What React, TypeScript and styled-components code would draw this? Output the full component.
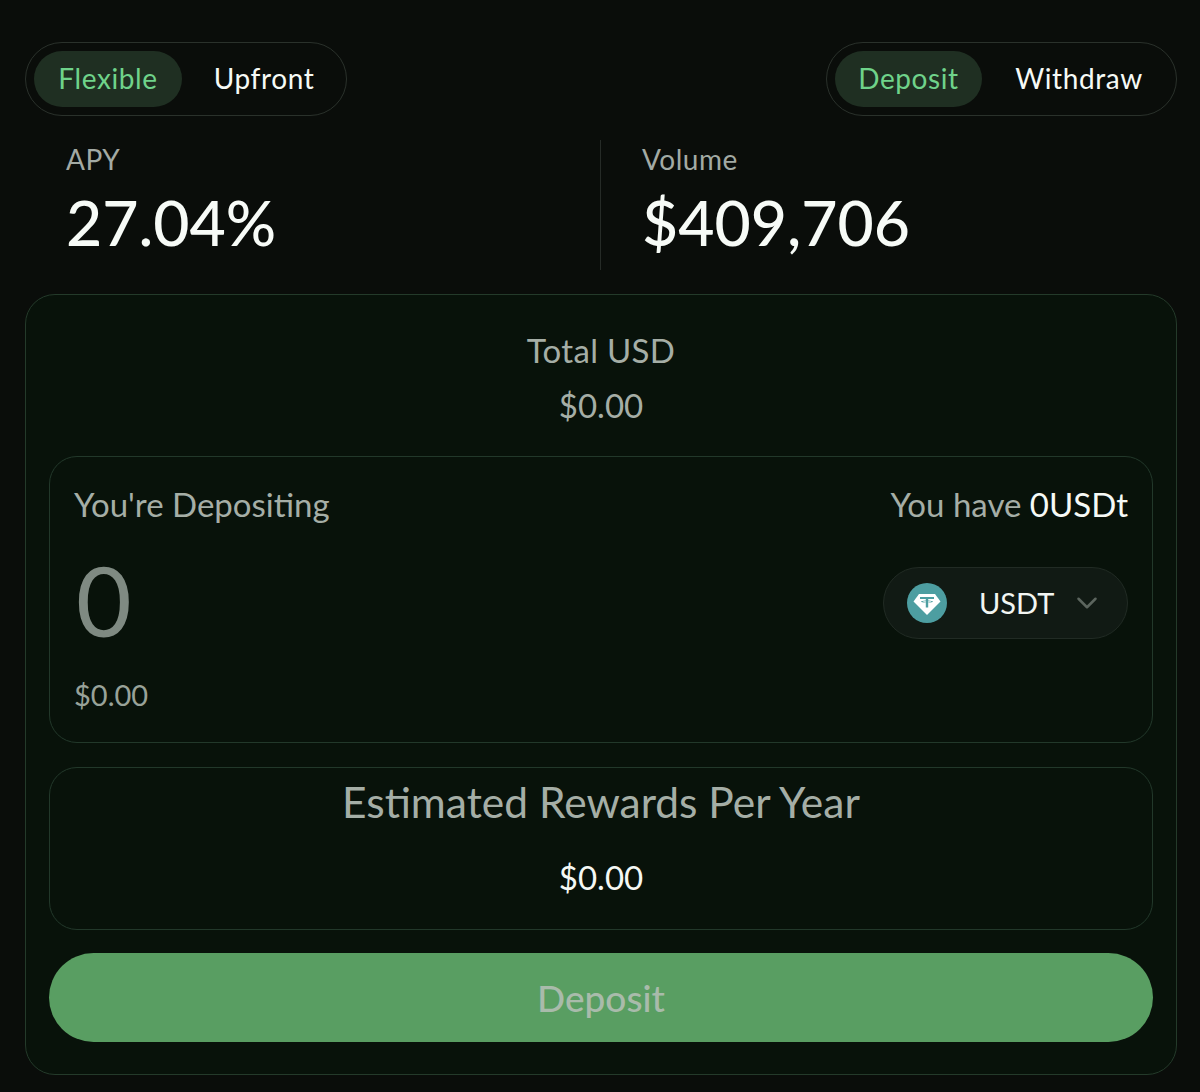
import React, { useState } from 'react';
import styled, { createGlobalStyle } from 'styled-components';
import { ChevronDown } from 'lucide-react';

const GlobalStyle = createGlobalStyle`
  html, body {
    margin: 0;
    padding: 0;
    background: #0a0d0a;
  }
  * {
    box-sizing: border-box;
  }
`;

const Page = styled.div`
  width: 1200px;
  height: 1092px;
  padding: 42px 23px 17px 25px;
  background: #0a0d0a;
  color: #f4f8f4;
  font-family: 'Lato', 'Noto Sans', sans-serif;
  display: flex;
  flex-direction: column;
`;

const TopBar = styled.div`
  display: flex;
  justify-content: space-between;
`;

const Toggle = styled.div`
  height: 74px;
  display: flex;
  align-items: center;
  padding-left: 8px;
  border: 1px solid #2a312b;
  border-radius: 37px;
`;

const ToggleOption = styled.button<{ $active?: boolean; $width: number }>`
  width: ${(p) => p.$width}px;
  height: 56px;
  border: 0;
  border-radius: 28px;
  padding: 0 0 3px;
  background: ${(p) => (p.$active ? '#1f2f22' : 'transparent')};
  color: ${(p) => (p.$active ? '#6fd38a' : '#f6faf6')};
  font-family: inherit;
  font-size: 28px;
  letter-spacing: 0.6px;
`;

const Stats = styled.div`
  height: 130px;
  margin-top: 24px;
  display: grid;
  grid-template-columns: 575px 1fr;
`;

const Stat = styled.div<{ $divided?: boolean }>`
  padding-left: ${(p) => (p.$divided ? '41px' : '41px')};
  border-left: ${(p) => (p.$divided ? '1px solid #262b27' : '0')};
`;

const StatLabel = styled.div`
  margin-top: -1px;
  font-size: 28px;
  line-height: 40px;
  letter-spacing: 0.5px;
  color: #a3aaa4;
`;

const StatValue = styled.div`
  margin-top: 8px;
  font-size: 62.5px;
  line-height: 70px;
  font-weight: 500;
  color: #f7fbf7;
`;

const MainCard = styled.div`
  height: 781px;
  margin-top: 24px;
  padding: 32px 23px 32px;
  display: flex;
  flex-direction: column;
  background: #08120a;
  border: 1px solid #243a2a;
  border-radius: 30px;
`;

const TotalBlock = styled.div`
  height: 129px;
  text-align: center;
`;

const TotalLabel = styled.div`
  font-size: 33px;
  line-height: 46px;
  letter-spacing: 0.3px;
  color: #a5aea6;
`;

const TotalValue = styled.div`
  margin-top: 9px;
  font-size: 33px;
  line-height: 46px;
  color: #a5aea6;
`;

const InnerCard = styled.div`
  border: 1px solid #22382a;
  border-radius: 28px;
`;

const DepositCard = styled(InnerCard)`
  height: 288px;
  padding: 26px 24px 0;
  display: flex;
  flex-direction: column;
`;

const Row = styled.div`
  display: flex;
  justify-content: space-between;
  align-items: center;
`;

const Muted = styled.div`
  font-size: 33px;
  line-height: 42px;
  color: #a5aea6;
`;

const Bright = styled.span`
  color: #f6faf6;
`;

const AmountRow = styled(Row)`
  margin-top: 42px;
  height: 72px;
`;

const Amount = styled.div`
  margin-left: 2px;
  padding-bottom: 6px;
  font-size: 96px;
  line-height: 72px;
  color: #7f8a82;
`;

const TokenSelect = styled.button`
  width: 245px;
  height: 72px;
  padding: 0 23px 0 23px;
  display: flex;
  align-items: center;
  background: #111a14;
  border: 1px solid #212b24;
  border-radius: 36px;
  color: #f2f6f2;
  font-family: inherit;
  font-size: 29px;
`;

const TokenName = styled.span`
  margin-left: 32px;
  flex: 1;
  text-align: left;
`;

const FiatValue = styled.div`
  margin-top: 36px;
  font-size: 29px;
  line-height: 40px;
  color: #98a299;
`;

const RewardsCard = styled(InnerCard)`
  height: 163px;
  margin-top: 24px;
  padding-top: 7px;
  text-align: center;
`;

const RewardsTitle = styled.div`
  font-size: 42.5px;
  line-height: 54px;
  color: #a5aea6;
`;

const RewardsValue = styled.div`
  margin-top: 25px;
  font-size: 33px;
  line-height: 46px;
  color: #f4f8f4;
`;

const SubmitButton = styled.button`
  height: 89px;
  margin-top: 23px;
  border: 0;
  border-radius: 45px;
  background: #599e62;
  color: #a9bbab;
  font-family: inherit;
  font-size: 37px;
  font-weight: 500;
`;

const TetherIcon = () => (
  <svg width="40" height="40" viewBox="0 0 40 40" aria-hidden="true">
    <circle cx="20" cy="20" r="20" fill="#4d9ea1" />
    <path d="M12 11h16l5.5 7.5L20 32 6.500 18.500z" fill="#fff" />
    <path
      d="M13 14h14v1.900h-5.800v1.500c2.700.15 4.800.55 4.800 1.100s-2.100.95-4.800 1.100v4.900h-2.400v-4.900c-2.700-.15-4.800-.55-4.800-1.100s2.100-.95 4.800-1.100v-1.500h-5.800zM18.800 18.300c-1.700.1-3.100.3-3.100.45s2 .45 4.300.45 4.300-.25 4.300-.45-1.400-.35-3.100-.45v.9h-2.400z"
      fill="#4d9ea1"
      fillRule="evenodd"
    />
  </svg>
);

export default function App() {
  const [mode, setMode] = useState('Flexible');
  const [side, setSide] = useState('Deposit');

  return (
    <Page>
      <GlobalStyle />
      <TopBar>
        <Toggle>
          <ToggleOption $width={148} $active={mode === 'Flexible'} onClick={() => setMode('Flexible')}>
            Flexible
          </ToggleOption>
          <ToggleOption $width={164} $active={mode === 'Upfront'} onClick={() => setMode('Upfront')}>
            Upfront
          </ToggleOption>
        </Toggle>
        <Toggle>
          <ToggleOption $width={147} $active={side === 'Deposit'} onClick={() => setSide('Deposit')}>
            Deposit
          </ToggleOption>
          <ToggleOption $width={194} $active={side === 'Withdraw'} onClick={() => setSide('Withdraw')}>
            Withdraw
          </ToggleOption>
        </Toggle>
      </TopBar>

      <Stats>
        <Stat>
          <StatLabel>APY</StatLabel>
          <StatValue>27.04%</StatValue>
        </Stat>
        <Stat $divided>
          <StatLabel>Volume</StatLabel>
          <StatValue>$409,706</StatValue>
        </Stat>
      </Stats>

      <MainCard>
        <TotalBlock>
          <TotalLabel>Total USD</TotalLabel>
          <TotalValue>$0.00</TotalValue>
        </TotalBlock>

        <DepositCard>
          <Row>
            <Muted>You're Depositing</Muted>
            <Muted>
              You have <Bright>0USDt</Bright>
            </Muted>
          </Row>
          <AmountRow>
            <Amount>0</Amount>
            <TokenSelect>
              <TetherIcon />
              <TokenName>USDT</TokenName>
              <ChevronDown size={34} color="#5c655e" strokeWidth={1.8} />
            </TokenSelect>
          </AmountRow>
          <FiatValue>$0.00</FiatValue>
        </DepositCard>

        <RewardsCard>
          <RewardsTitle>Estimated Rewards Per Year</RewardsTitle>
          <RewardsValue>$0.00</RewardsValue>
        </RewardsCard>

        <SubmitButton disabled>Deposit</SubmitButton>
      </MainCard>
    </Page>
  );
}
